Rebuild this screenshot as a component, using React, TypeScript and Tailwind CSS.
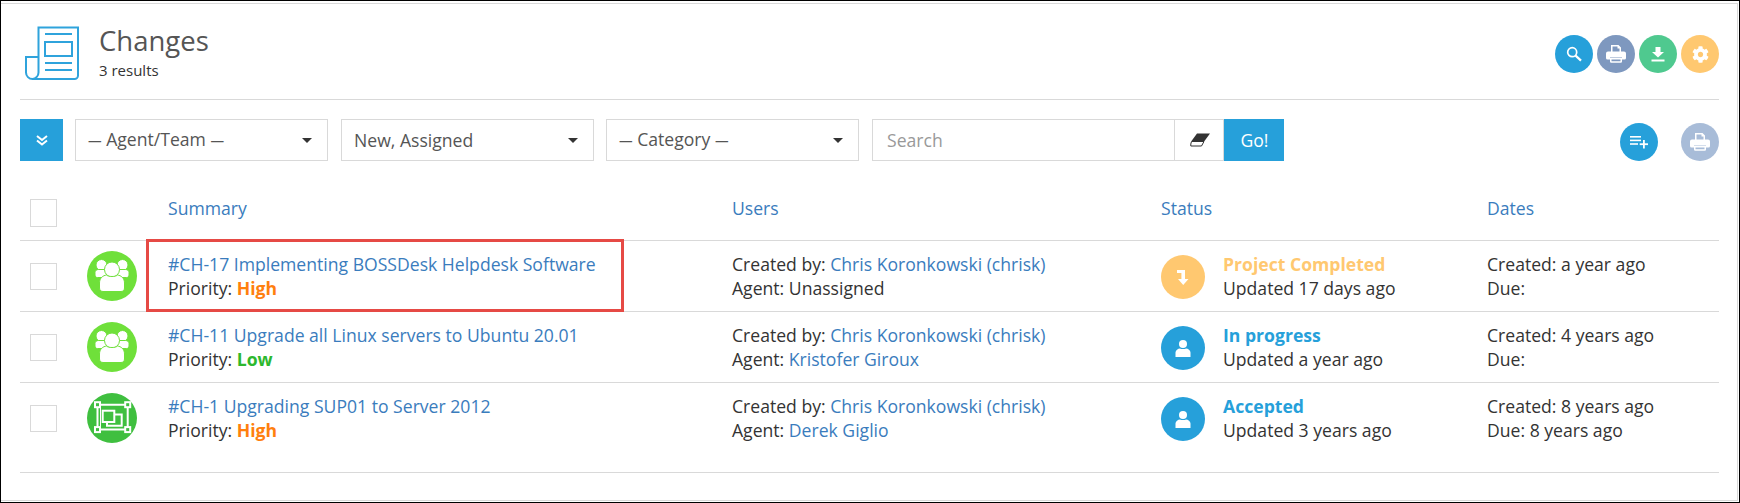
import React from "react";
import { FaCog } from "react-icons/fa";

const Newspaper = () => (
  <svg width="54" height="54" viewBox="0 0 54 54" fill="none" stroke="#2fa3dc" strokeWidth="2">
    <path d="M8 53H49.5a3.5 3.5 0 0 0 3.5-3.5V1.5H13.5V46.5a6.5 6.5 0 0 1-6 6.5a6.5 6.5 0 0 1-6.5-6.5V31H13.5" />
    <path d="M20 8H47M20 37H47M20 44H47" />
    <rect x="20" y="16" width="27" height="14" />
  </svg>
);
const SearchI = () => (
  <svg width="16" height="16" viewBox="0 0 16 16" fill="none" stroke="#fff">
    <circle cx="6.2" cy="6.2" r="4.5" strokeWidth="1.7" />
    <path d="M9.6 9.6L15 14.6" strokeWidth="2.2" />
  </svg>
);
const PrintI = () => (
  <svg width="20" height="18" viewBox="0 0 20 18" fill="#fff">
    <path d="M5 0H12.5L15 2.5V7H13.5V3.5H11.5V1.5H6.5V7H5Z" />
    <path fillRule="evenodd" d="M2 6.5H18a2 2 0 0 1 2 2V13a1.5 1.5 0 0 1-1.5 1.5H16V12.5H4V14.5H1.5A1.5 1.5 0 0 1 0 13V8.5a2 2 0 0 1 2-2Z" />
    <path d="M4 13H16V16.5a1.2 1.2 0 0 1-1.2 1.2H5.2A1.2 1.2 0 0 1 4 16.5ZM5.5 14.4V16.3H14.5V14.4Z" fillRule="evenodd" />
  </svg>
);
const DownloadI = () => (
  <svg width="14" height="15" viewBox="0 0 14 15" fill="#fff">
    <path d="M4.5 0H9.5V5H13L7 10.5L1 5H4.5Z" />
    <rect x="0.5" y="12.5" width="13" height="2" />
  </svg>
);
const ListPlus = () => (
  <svg width="18" height="14" viewBox="0 0 18 14" fill="#fff">
    <rect x="0" y="1" width="11" height="1.6" />
    <rect x="0" y="4.6" width="11" height="1.6" />
    <rect x="0" y="8.2" width="8" height="1.6" />
    <rect x="13" y="5" width="1.8" height="8.5" />
    <rect x="9.7" y="8.3" width="8.3" height="1.8" />
  </svg>
);
const ChevronsDown = () => (
  <svg width="12" height="11" viewBox="0 0 12 11" fill="none" stroke="#fff" strokeWidth="2">
    <path d="M1 1L6 5L11 1M1 5.5L6 9.5L11 5.5" />
  </svg>
);
const Eraser = () => (
  <svg width="20" height="14" viewBox="0 0 20 14">
    <path d="M7 0.5H20L14.5 8H1.5Z" fill="#333" />
    <path d="M1.5 8.5H14L11.5 13H0.8L0.8 11Z" fill="#fff" stroke="#333" strokeWidth="1" />
  </svg>
);
const TurnDown = () => (
  <svg width="12" height="15" viewBox="0 0 12 15" fill="#fff">
    <path d="M0 0H8V9H11.5L6.2 15L1 9H4.4V3H0Z" />
  </svg>
);
const UserI = () => (
  <svg width="16" height="17" viewBox="0 0 16 17" fill="#fff">
    <circle cx="8" cy="4" r="4" />
    <path d="M0.5 17V12.5C0.5 10 3 8.6 5 8.4C6 9.2 10 9.2 11 8.4C13 8.6 15.5 10 15.5 12.5V17Z" />
  </svg>
);
const Group = () => (
  <svg width="50" height="50" viewBox="0 0 50 50" fill="#fff" stroke="#6fe03a" strokeWidth="1">
    <circle cx="14.500" cy="14" r="5.500" />
    <circle cx="35.500" cy="14" r="5.500" />
    <path d="M8 24V21.500C8 19.500 9.500 18.500 11.500 18.500H38.500C40.500 18.500 42 19.500 42 21.500V24C42 25.500 41 26.500 39.500 26.500H10.500C9 26.500 8 25.500 8 24Z" />
    <circle cx="25" cy="18.500" r="7.500" />
    <path d="M12.500 37V32C12.500 27 16 24.500 19.500 24C21.500 26 28.500 26 30.500 24C34 24.500 37.500 27 37.500 32V37C37.500 39 36 40.500 34 40.500H16C14 40.500 12.500 39 12.500 37Z" />
  </svg>
);
const Transform = () => (
  <svg width="50" height="50" viewBox="0 0 50 50" fill="none" stroke="#fff" strokeWidth="2">
    <path d="M10.500 11.700H40.700V36.600H10.500Z" />
    <path d="M13.500 14.700V33.600" strokeWidth="1" />
    <rect x="8" y="9.200" width="5" height="5" fill="#3fbf3f" />
    <rect x="38.200" y="9.200" width="5" height="5" fill="#3fbf3f" />
    <rect x="8" y="34.100" width="5" height="5" fill="#3fbf3f" />
    <rect x="38.200" y="34.100" width="5" height="5" fill="#3fbf3f" />
    <rect x="15.700" y="17.700" width="11.600" height="11.300" />
    <path d="M27.300 21.500H34.700V32.700H20V29" />
  </svg>
);

const Circle = ({ bg, children }: { bg: string; children: React.ReactNode }) => (
  <div className={`flex h-[38px] w-[38px] items-center justify-center rounded-full ${bg}`}>{children}</div>
);

const Select = ({ label, cls }: { label: React.ReactNode; cls: string }) => (
  <div className={`flex h-[42px] w-[253px] items-center justify-between border border-[#d9d9d9] pl-[12px] pr-[15px] text-[#555] ${cls}`}>
    <span>{label}</span>
    <svg width="10" height="5" viewBox="0 0 10 5" fill="#333">
      <path d="M0 0H10L5 5Z" />
    </svg>
  </div>
);

const Dash = () => <span className="text-[13.600px]">—</span>;

const Box = ({ cls }: { cls: string }) => (
  <div className={`w-[27px] border border-[#d9d9d9] ${cls}`} />
);

const A = ({ children }: { children: React.ReactNode }) => <span className="text-[#3a7cbd]">{children}</span>;

const Row = ({
  height,
  outlined,
  avatar,
  avatarBg,
  title,
  priority,
  priorityCls,
  agent,
  statusIcon,
  statusBg,
  status,
  statusCls,
  updated,
  created,
  due,
}: {
  height: string;
  outlined?: boolean;
  avatar: React.ReactNode;
  avatarBg: string;
  title: string;
  priority: string;
  priorityCls: string;
  agent: React.ReactNode;
  statusIcon: React.ReactNode;
  statusBg: string;
  status: string;
  statusCls: string;
  updated: string;
  created: string;
  due: string;
}) => (
  <div className={`relative grid grid-cols-[57px_81px_564px_429px_326px_1fr] border-b border-[#d9d9d9] pl-[10px] ${height}`}>
    <div className="pt-[22px]">
      <Box cls="h-[27px]" />
    </div>
    <div className="pt-[10px]">
      <div className={`flex h-[50px] w-[50px] items-center justify-center rounded-full ${avatarBg}`}>{avatar}</div>
    </div>
    <div className="pt-[11px]">
      <div>
        <A>{title}</A>
      </div>
      <div>
        Priority: <span className={`font-bold ${priorityCls}`}>{priority}</span>
      </div>
    </div>
    <div className="pt-[11px]">
      <div>
        Created by: <A>Chris Koronkowski (chrisk)</A>
      </div>
      <div>Agent: {agent}</div>
    </div>
    <div className="flex gap-[18px] pt-[14px]">
      <div className={`flex h-[44px] w-[44px] items-center justify-center rounded-full ${statusBg}`}>{statusIcon}</div>
      <div className="-mt-[3px]">
        <div className={`font-bold ${statusCls}`}>{status}</div>
        <div>{updated}</div>
      </div>
    </div>
    <div className="pt-[11px]">
      <div>{created}</div>
      <div>{due}</div>
    </div>
    {outlined && (
      <div className="pointer-events-none absolute left-[126px] top-[-2px] h-[73px] w-[478px] border-[3px] border-[#e64a45]" />
    )}
  </div>
);

export default function App() {
  return (
    <div className="flex h-[503px] w-[1740px] flex-col border border-black bg-white pb-[1px] pr-[1px] pt-[2px] font-['Open_Sans',sans-serif] text-[17.6px] leading-6 text-[#333]">
      <div className="flex-1 border-b border-r border-t border-[#d9d9d9] pl-[19px] pr-[18px]">
        <div className="flex h-[96px] items-start border-b border-[#d9d9d9] pt-[22px]">
          <div className="ml-[5px]">
            <Newspaper />
          </div>
          <div className="ml-[20px] text-[#555]">
            <div className="text-[27.500px] leading-[30px]">Changes</div>
            <div className="mt-[4px] text-[15px] leading-[20px] text-[#333]">3 results</div>
          </div>
          <div className="ml-auto mt-[9px] flex gap-[4px]">
            <Circle bg="bg-[#26a0da]">
              <SearchI />
            </Circle>
            <Circle bg="bg-[#7e98bf]">
              <PrintI />
            </Circle>
            <Circle bg="bg-[#4fc98f]">
              <DownloadI />
            </Circle>
            <Circle bg="bg-[#ffc870]">
              <FaCog size={17} color="#fff" />
            </Circle>
          </div>
        </div>

        <div className="mt-[19px] flex h-[42px] items-start">
          <div className="flex h-[42px] w-[43px] items-center justify-center bg-[#26a0da]">
            <ChevronsDown />
          </div>
          <Select label={<><Dash /> Agent/Team <Dash /></>} cls="ml-3" />
          <Select label="New, Assigned" cls="ml-[13px]" />
          <Select label={<><Dash /> Category <Dash /></>} cls="ml-3" />
          <div className="ml-[13px] flex h-[42px] w-[303px] items-center border border-[#d9d9d9] pl-[14px] text-[#999]">Search</div>
          <div className="flex h-[42px] w-[49px] items-center justify-center border-y border-r border-[#d9d9d9] pl-[2px]">
            <Eraser />
          </div>
          <div className="flex h-[42px] w-[60px] items-center justify-center bg-[#26a0da] pl-[1px] text-white">Go!</div>
          <div className="ml-auto mt-[4px] flex gap-[23px]">
            <Circle bg="bg-[#26a0da]">
              <ListPlus />
            </Circle>
            <Circle bg="bg-[#a8bcd8]">
              <PrintI />
            </Circle>
          </div>
        </div>

        <div className="grid h-[80px] grid-cols-[57px_81px_564px_429px_326px_1fr] border-b border-[#d9d9d9] pl-[10px] text-[#3a7cbd]">
          <div className="pt-[38px]">
            <Box cls="h-[28px]" />
          </div>
          <div />
          <div className="pt-[35px]">Summary</div>
          <div className="pt-[35px]">Users</div>
          <div className="pt-[35px]">Status</div>
          <div className="pt-[35px]">Dates</div>
        </div>

        <Row
          height="h-[71px]"
          outlined
          avatar={<Group />}
          avatarBg="bg-[#6fe03a]"
          title="#CH-17 Implementing BOSSDesk Helpdesk Software"
          priority="High"
          priorityCls="text-[#ff7f0e]"
          agent="Unassigned"
          statusIcon={<TurnDown />}
          statusBg="bg-[#ffc870]"
          status="Project Completed"
          statusCls="text-[#ffc870]"
          updated="Updated 17 days ago"
          created="Created: a year ago"
          due="Due:"
        />
        <Row
          height="h-[71px]"
          avatar={<Group />}
          avatarBg="bg-[#6fe03a]"
          title="#CH-11 Upgrade all Linux servers to Ubuntu 20.01"
          priority="Low"
          priorityCls="text-[#2db82d]"
          agent={<A>Kristofer Giroux</A>}
          statusIcon={<UserI />}
          statusBg="bg-[#26a0da]"
          status="In progress"
          statusCls="text-[#26a0da]"
          updated="Updated a year ago"
          created="Created: 4 years ago"
          due="Due:"
        />
        <Row
          height="h-[90px]"
          avatar={<Transform />}
          avatarBg="bg-[#3fbf3f]"
          title="#CH-1 Upgrading SUP01 to Server 2012"
          priority="High"
          priorityCls="text-[#ff7f0e]"
          agent={<A>Derek Giglio</A>}
          statusIcon={<UserI />}
          statusBg="bg-[#26a0da]"
          status="Accepted"
          statusCls="text-[#26a0da]"
          updated="Updated 3 years ago"
          created="Created: 8 years ago"
          due="Due: 8 years ago"
        />
      </div>
    </div>
  );
}
